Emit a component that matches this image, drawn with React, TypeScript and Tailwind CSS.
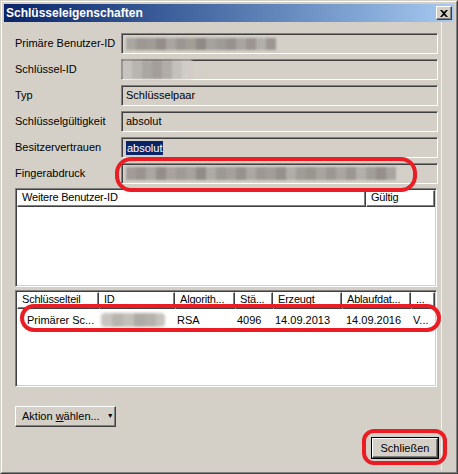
const font = { fontFamily: '"Liberation Sans", Arial, sans-serif' };

const sunken =
  'border border-[#808080] border-r-white border-b-white shadow-[inset_1px_1px_0_#404040,inset_-1px_-1px_0_#d4d0c8]';
const raised =
  'border border-white border-r-[#404040] border-b-[#404040] shadow-[inset_-1px_-1px_0_#808080]';

// pixelated blur used for censored values
const Blur = ({ tones, h = 'h-[12px]' }: { tones: string[]; h?: string }) => (
  <div className={`flex blur-[1px] ${h}`}>
    {tones.map((c, i) => (
      <span key={i} className="w-[10px] h-full" style={{ backgroundColor: c }} />
    ))}
  </div>
);

const Field = ({ label, children }: { label: string; children?: React.ReactNode }) => (
  <div className="flex items-center h-[21px]">
    <div className="w-[106px] text-[11px] text-black">{label}</div>
    <div className={`w-[317px] h-[21px] flex items-center pl-[4px] ${sunken}`}>{children}</div>
  </div>
);

const HeaderCell = ({ w, label }: { w: string; label: string }) => (
  <div className={`${w} h-[17px] shrink-0 pl-[4px] text-[11px] leading-[13px] whitespace-nowrap overflow-hidden tracking-[-0.2px] ${raised}`}>
    {label}
  </div>
);

export default function App() {
  const grays1 = ['#aaa6a1', '#9d9893', '#a09b96', '#938e8a', '#a9a5a1', '#9b9691', '#a39d98', '#8f8a86', '#a6a29e', '#9e9a95', '#97928e', '#a8a4a0', '#9a9591', '#b2afab', '#9c9793', '#bcb9b5'];
  const grays2 = ['#c6c2bd', '#b8b4af', '#aaa6a1', '#a39e99', '#b0aca8', '#c4c1bc', '#d0ccc7'];
  const grays3 = ['#a19c98', '#99948f', '#aaa6a2', '#938e8a', '#a8a39e', '#9f9a96', '#a6a29d', '#918c88', '#aeaaa6', '#9c9894', '#a4a09b', '#97928e', '#aba7a3', '#9d9894', '#a19d99', '#95908c', '#b0aca8', '#a09c97', '#99958f', '#a7a39f', '#9c9793', '#a9a5a0', '#9a9691', '#b3afab', '#a29e99', '#958f8b', '#a8a4a0'];
  const grays4 = ['#c9c5c1', '#b8b4b0', '#c3bfbb', '#aeaaa6', '#b5b1ad', '#c7c3bf'];

  return (
    <div className="w-[458px] h-[474px] bg-[#d4d0c8] border border-[#d4d0c8] border-r-[#404040] border-b-[#404040]" style={font}>
      <div className="relative h-full border border-white border-r-[#808080] border-b-[#808080] p-[2px] flex flex-col">
        {/* title bar */}
        <div className="h-[18px] bg-gradient-to-r from-[#0a246a] to-[#a6caf0] flex items-center justify-between pl-[2px] pr-[2px]">
          <span className="text-white font-bold text-[12px] leading-[18px]">Schlüsseleigenschaften</span>
          <div className={`w-[16px] h-[14px] bg-[#d4d0c8] flex items-center justify-center ${raised}`}>
            <svg width="8" height="7" viewBox="0 0 8 7">
              <path d="M0 0h2l2 2 2-2h2L5 3.5 8 7H6L4 5 2 7H0l3-3.5z" fill="#000" />
            </svg>
          </div>
        </div>

        <div className="flex flex-1 border-r border-[#f4f2ee] mr-[12px]">
          <div className="flex flex-col pl-[11px] pt-[11px] w-full">
            <div className="flex flex-col gap-[5px]">
              <Field label="Primäre Benutzer-ID">
                <Blur tones={grays1.slice(0, 15)} h="h-[12px]" />
              </Field>
              <Field label="Schlüssel-ID">
                <div className="-ml-[4px]">
                  <Blur tones={grays2} h="h-[19px]" />
                </div>
              </Field>
              <Field label="Typ">
                <span className="text-[11px]">Schlüsselpaar</span>
              </Field>
              <Field label="Schlüsselgültigkeit">
                <span className="text-[11px]">absolut</span>
              </Field>
              <Field label="Besitzervertrauen">
                <span className="text-[11px] bg-[#0a246a] text-white leading-[14px] px-[1px]">absolut</span>
              </Field>
              <Field label="Fingerabdruck">
                <Blur tones={grays3} h="h-[13px]" />
              </Field>
            </div>

            {/* user id table */}
            <div className={`mt-[4px] w-[422px] h-[99px] bg-white p-[1px] ${sunken}`}>
              <div className="flex">
                <HeaderCell w="w-[349px]" label="Weitere Benutzer-ID" />
                <HeaderCell w="w-[69px]" label="Gültig" />
              </div>
            </div>

            {/* key parts table */}
            <div className={`mt-[3px] w-[422px] h-[97px] bg-white p-[1px] ${sunken}`}>
              <div className="flex">
                <HeaderCell w="w-[82px]" label="Schlüsselteil" />
                <HeaderCell w="w-[76px]" label="ID" />
                <HeaderCell w="w-[60px]" label="Algorith..." />
                <HeaderCell w="w-[38px]" label="Stä..." />
                <HeaderCell w="w-[69px]" label="Erzeugt" />
                <HeaderCell w="w-[69px]" label="Ablaufdat..." />
                <HeaderCell w="w-[24px]" label="..." />
              </div>
              <div className="flex items-center h-[22px] text-[11px] text-black">
                <div className="w-[82px] pl-[10px]">Primärer Sc...</div>
                <div className="w-[76px] pl-[2px]">
                  <div className="flex blur-[1.5px] h-[14px] w-[64px] overflow-hidden rounded-sm">
                    {grays4.map((c, i) => (
                      <span key={i} className="w-[11px] h-full shrink-0" style={{ backgroundColor: c }} />
                    ))}
                  </div>
                </div>
                <div className="w-[60px] pl-[2px]">RSA</div>
                <div className="w-[38px] pl-[2px]">4096</div>
                <div className="w-[69px] pl-[2px]">14.09.2013</div>
                <div className="w-[69px] pl-[4px]">14.09.2016</div>
                <div className="w-[24px] pl-[2px]">V...</div>
              </div>
            </div>

            <div className="mt-[19px]">
              <button className={`w-[101px] h-[21px] bg-[#d4d0c8] text-[11px] text-black flex items-center pl-[6px] ${raised}`}>
                Aktion&nbsp;<span className="underline">w</span>ählen...
                <span className="ml-[7px] text-[7px]">▼</span>
              </button>
            </div>

            <div className="flex justify-end pr-[2px] mt-[10px]">
              <div className="border border-black">
                <button className={`w-[66px] h-[20px] bg-[#d4d0c8] text-[11px] text-black flex items-center justify-center ${raised}`}>
                  Schließen
                </button>
              </div>
            </div>
          </div>
        </div>

        {/* red annotation marks */}
        <div className="absolute left-[113px] top-[155px] w-[302px] h-[35px] border-[4px] border-[#ec1c24] rounded-[16px]" />
        <div className="absolute left-[18px] top-[302px] w-[421px] h-[28px] border-[4px] border-[#ec1c24] rounded-[14px]" />
        <div className="absolute left-[360px] top-[427px] w-[85px] h-[36px] border-[4px] border-[#ec1c24] rounded-[12px]" />
      </div>
    </div>
  );
}
